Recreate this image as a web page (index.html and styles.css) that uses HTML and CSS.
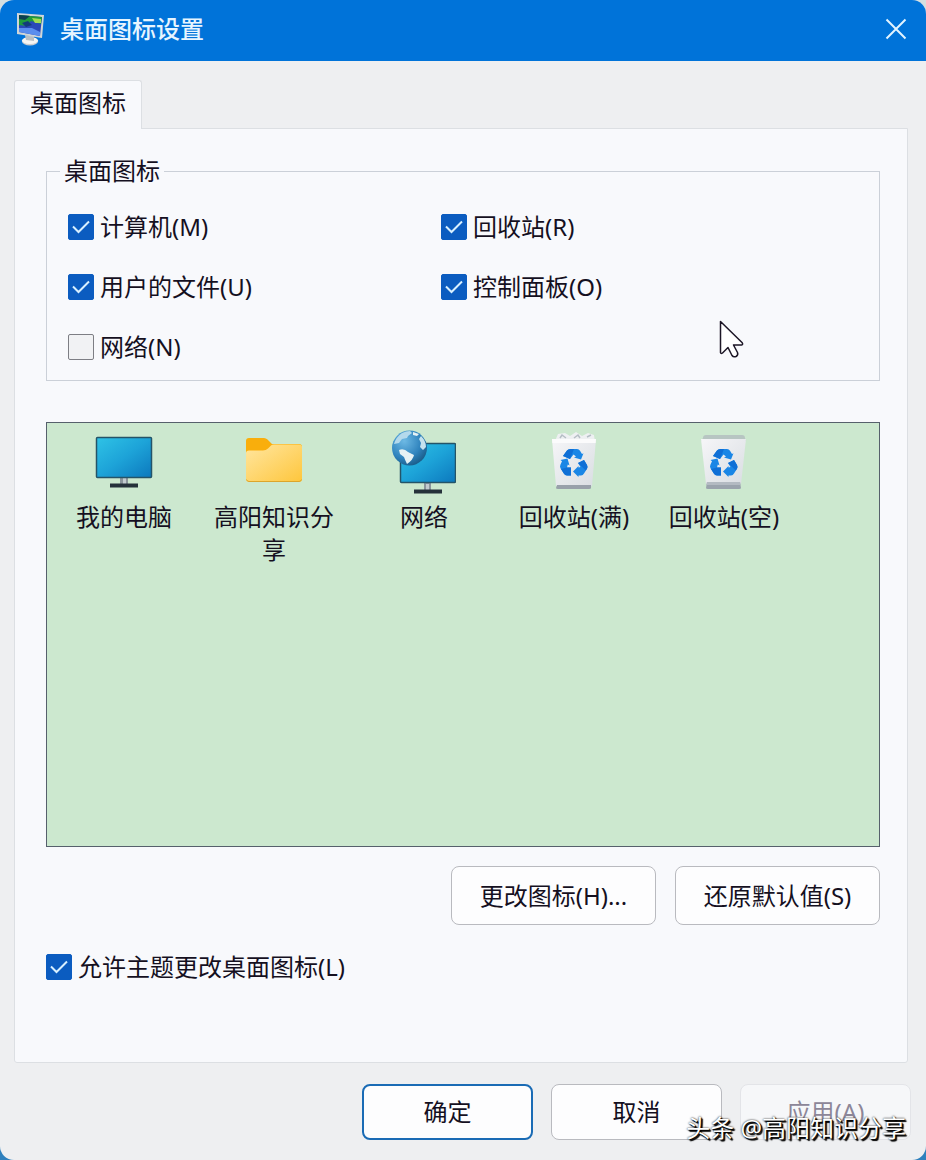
FILE: index.html
```html
<!DOCTYPE html>
<html lang="zh-CN">
<head>
    <meta charset="UTF-8">
    <meta name="viewport" content="width=device-width, initial-scale=1.0">
    <title>桌面图标设置</title>
    <link rel="stylesheet" href="styles.css">
</head>
<body>
    <!-- shared shapes -->
    <svg class="defs" width="0" height="0" aria-hidden="true">
        <defs>
            <linearGradient id="screen" x1="0" y1="0" x2="1" y2="1">
                <stop offset="0" stop-color="#2fc3e6"/>
                <stop offset="0.5" stop-color="#1da3d8"/>
                <stop offset="1" stop-color="#0c78bd"/>
            </linearGradient>
            <linearGradient id="folder" x1="0" y1="0" x2="1" y2="1">
                <stop offset="0" stop-color="#ffe6a0"/>
                <stop offset="1" stop-color="#fec63c"/>
            </linearGradient>
            <radialGradient id="globe" cx="0.35" cy="0.3" r="0.8">
                <stop offset="0" stop-color="#6db9e4"/>
                <stop offset="0.6" stop-color="#2f83bd"/>
                <stop offset="1" stop-color="#16557f"/>
            </radialGradient>
            <linearGradient id="bin" x1="0" y1="0" x2="1" y2="1">
                <stop offset="0" stop-color="#f6f6f8"/>
                <stop offset="1" stop-color="#d9dde2"/>
            </linearGradient>
            <g id="recycle">
                <path fill="#1a86e6" d="M24 30 L28 24.500 Q29 23 31.500 23 H38 Q40 23 41 24.700 L43 28 L44.500 27.200 L42 33.500 L35 31.500 L37 30.500 L34.500 28.500 L31 33 Z"/>
                <path fill="#0f6fd6" d="M24 30 L28 24.500 Q29 23 31.500 23 H35 L31 33 Z"/>
                <path fill="#1a86e6" d="M45 34 L48 39 Q49 41 48 42.800 L45 47.500 Q44 49.500 42 49.500 H39.500 V51 L34 45.500 L39.500 40 V41.500 L41.500 41 L39 37 Z"/>
                <path fill="#0f6fd6" d="M45 34 L48 39 Q49 41 48 42.800 L46.800 44.500 L39 37 Z"/>
                <path fill="#1a86e6" d="M21.500 34 L28.500 32.500 L30.500 39.500 L28.800 38.600 L28 41.500 H32 V49.500 H28 Q26 49.500 25 47.800 L21.500 42.300 Q20.500 40.500 21.500 38.500 L23 35.200 Z"/>
                <path fill="#0f6fd6" d="M32 41.500 V49.500 H28 Q26 49.500 25 47.800 L22 43 L28 41.500 Z"/>
            </g>
        </defs>
    </svg>

    <main class="dialog">
        <header class="titlebar">
            <svg class="title-icon" width="32" height="36" viewBox="0 0 32 36" aria-hidden="true">
                <ellipse cx="16" cy="30.500" rx="8" ry="4" fill="#c9ccd0"/>
                <ellipse cx="16" cy="29.500" rx="8" ry="3.500" fill="#f5f5f3"/>
                <path d="M11 24 L20 25 V30 L12 29 Z" fill="#b9bfc4"/>
                <path d="M3 2 L30 4 L28 27 L3 23 Z" fill="#cfd6d8"/>
                <path d="M5 4 L28 6 L26 25 L5 21 Z" fill="#2a49b8"/>
                <path d="M5 4 L28 6 L27 13 L17 10 L13 15 L5 14 Z" fill="#1f9a3c"/>
                <path d="M5 4 L16 5 L11 9 L5 8 Z" fill="#0d3f50"/>
                <path d="M18 7 L27 8 L27 12 L21 12 Z" fill="#a2dc52"/>
                <path d="M8 12 L14 10 L18 14 L12 16 Z" fill="#123b7a"/>
                <path d="M5 17 L18 17 L26 21 L26 25 L5 21 Z" fill="#5a8eee"/>
            </svg>
            <h1>桌面图标设置</h1>
            <button class="close" type="button" aria-label="关闭">
                <svg width="22" height="22" viewBox="0 0 22 22" aria-hidden="true">
                    <path d="M1.500 1.500 L20.500 20.500 M20.500 1.500 L1.500 20.500" stroke="#e2f4ff" stroke-width="2" fill="none"/>
                </svg>
            </button>
        </header>

        <div class="content">
            <div class="tabs">
                <button class="tab" type="button">桌面图标</button>
            </div>

            <section class="panel">
                <fieldset class="group">
                    <legend>桌面图标</legend>
                    <div class="options">
                        <label class="check"><input type="checkbox" checked>计算机(M)</label>
                        <label class="check"><input type="checkbox" checked>回收站(R)</label>
                        <label class="check"><input type="checkbox" checked>用户的文件(U)</label>
                        <label class="check"><input type="checkbox" checked>控制面板(O)</label>
                        <label class="check"><input type="checkbox">网络(N)</label>
                    </div>
                    <svg class="cursor" width="26" height="40" viewBox="0 0 26 40" aria-hidden="true">
                        <path d="M1.500 1.500 V32.500 Q2 34 3.500 33 L9 27.500 L13 35.500 Q14.500 37.500 17 36.500 Q19.500 35 18.500 32.500 L14.500 25 H22.500 Q24.500 24.500 23 22.500 Z" fill="#fff" stroke="#1c1626" stroke-width="1.500" stroke-linejoin="round"/>
                    </svg>
                </fieldset>

                <ul class="icons">
                    <li>
                        <svg width="64" height="64" viewBox="0 0 64 64" aria-hidden="true">
                            <rect x="28" y="47" width="8" height="7" fill="#8b959c"/>
                            <rect x="31" y="48" width="3" height="6" fill="#c3cbd0"/>
                            <rect x="18" y="53.500" width="28" height="4" fill="#25313a"/>
                            <rect x="4.500" y="7.500" width="55" height="40" rx="1" fill="url(#screen)" stroke="#245468" stroke-width="1.500"/>
                        </svg>
                        <span>我的电脑</span>
                    </li>
                    <li>
                        <svg width="64" height="64" viewBox="0 0 64 64" aria-hidden="true">
                            <path d="M4 11 Q4 8 7 8 H22 Q24 8 25.500 9.500 L30 14 H57 Q60 14 60 17 V30 H4 Z" fill="#f9ae0c"/>
                            <path d="M4 23 Q4 20.500 7 20.500 H21 Q24 20.500 26 18.500 L29 15.500 Q30 14.500 32 14.500 H57 Q60 14.500 60 17 V49 Q60 52 57 52 H7 Q4 52 4 49 Z" fill="url(#folder)"/>
                            <path d="M4.500 49.500 Q5 51.500 7 51.500 H57 Q59 51.500 59.500 49.500" fill="none" stroke="#dca52c"/>
                        </svg>
                        <span>高阳知识分享</span>
                    </li>
                    <li>
                        <svg width="64" height="64" viewBox="0 0 64 64" aria-hidden="true">
                            <rect x="32" y="53" width="7" height="7" fill="#8b959c"/>
                            <rect x="34" y="54" width="3" height="6" fill="#c3cbd0"/>
                            <rect x="22" y="59.500" width="28" height="4" fill="#25313a"/>
                            <rect x="8.500" y="13.500" width="55" height="39" rx="1" fill="url(#screen)" stroke="#245468" stroke-width="1.500"/>
                            <circle cx="17.500" cy="18" r="17.500" fill="url(#globe)"/>
                            <path d="M10 3 Q14 1 18 1 L20 3 L16 6 L15 8 L10 9 L7 13 L2 14 Q4 7 10 3 Z" fill="#b4d9ec"/>
                            <path d="M7 20 Q12 18 16 22 L22 25 Q21 30 15 34 Q13 30 12 27 L8 24 Z" fill="#e5f1f4"/>
                            <path d="M29 6 Q34 11 34 17 L31 20 L28 17 L29 13 L27 9 Z" fill="#c5e2ee"/>
                            <path d="M21 2 L27 4 L25 6 L21 5 Z" fill="#e5f1f4"/>
                        </svg>
                        <span>网络</span>
                    </li>
                    <li>
                        <svg width="64" height="64" viewBox="0 0 64 64" aria-hidden="true">
                            <path d="M13 11 L16 4 L23 3 L28 6 L34 2 L40 6 L46 3 L52 5 L53 12 Z" fill="#eef0f2"/>
                            <path d="M18 8 L20 5 L24 8 M32 8 L36 5 L38 8 M45 7 L49 5" stroke="#b5bec5" stroke-width="1.500" fill="none"/>
                            <path d="M10 9 H54 L50 56 H14 Z" fill="url(#bin)"/>
                            <path d="M10 9 H54 L53.600 13 H10.400 Z" fill="#fbfbfc"/>
                            <path d="M15 55 H49 L49 58 Q49 59 47 59 H16 Q14 59 14 58 Z" fill="#98a0aa"/>
                            <use href="#recycle" x="-3" y="-4"/>
                        </svg>
                        <span>回收站(满)</span>
                    </li>
                    <li>
                        <svg width="64" height="64" viewBox="0 0 64 64" aria-hidden="true">
                            <path d="M11 8 Q11 5 14 5 H50 Q53 5 53 8 L54 11 H9 Z" fill="#b7c5c2"/>
                            <path d="M9 9 H54 L49 54 H14 Z" fill="url(#bin)"/>
                            <path d="M15 52 H48 L49 58 Q49 59 47 59 H16 Q14 59 14 58 Z" fill="#9aa3ad"/>
                            <path d="M15 52 H48 L48.500 55 H14.500 Z" fill="#b3bac2"/>
                            <use href="#recycle" x="-3" y="-4"/>
                        </svg>
                        <span>回收站(空)</span>
                    </li>
                </ul>

                <div class="actions">
                    <button class="btn wide" type="button">更改图标(H)...</button>
                    <button class="btn wide" type="button">还原默认值(S)</button>
                </div>

                <label class="check theme"><input type="checkbox" checked>允许主题更改桌面图标(L)</label>
            </section>
        </div>

        <footer class="footer">
            <button class="btn primary" type="button">确定</button>
            <button class="btn" type="button">取消</button>
            <button class="btn" type="button" disabled>应用(A)</button>
        </footer>

        <div class="watermark">头条 @高阳知识分享</div>
    </main>
</body>
</html>
```
FILE: styles.css
```css
* {
    box-sizing: border-box;
}
body {
    margin: 0;
    background: linear-gradient(#d5dfe0 50%, #2f80bd 50%);
    font-family: "Noto Sans", "Noto Sans CJK SC", sans-serif;
    font-size: 24px;
    line-height: 32px;
    color: #15101f;
}
button {
    font: inherit;
    color: inherit;
}
.defs {
    display: block;
}
.dialog {
    position: relative;
    display: flex;
    flex-direction: column;
    min-height: 100vh;
    background-color: #eeeff1;
    border-radius: 14px;
    overflow: hidden;
}

/* title bar */
.titlebar {
    display: flex;
    align-items: center;
    gap: 14px;
    height: 61px;
    padding: 0 14px 3px;
    background-color: #0073d9;
    color: #e6f5ff;
}
.titlebar h1 {
    flex: 1;
    margin: 0;
    font-size: 24px;
    font-weight: 500;
}
.close {
    display: flex;
    padding: 5px;
    border: 0;
    background: none;
}

/* tab and panel */
.content {
    flex: 1;
    display: flex;
    flex-direction: column;
    padding: 19px 18px 0 14px;
}
.tabs {
    display: flex;
}
.tab {
    position: relative;
    height: 49px;
    margin-bottom: -1px;
    padding: 0 15px 4px;
    border: 1px solid #dcdfe3;
    border-bottom: 0;
    border-radius: 3px 3px 0 0;
    background-color: #f8f9fc;
}
.panel {
    flex: 1;
    display: flex;
    flex-direction: column;
    padding: 26px 27px 79px 31px;
    border: 1px solid #dcdfe3;
    border-radius: 0 0 3px 3px;
    background-color: #f8f9fc;
}

/* check boxes */
.group {
    position: relative;
    margin: 0;
    padding: 10px 0 3px 21px;
    border: 1px solid #cbd0d8;
}
.group legend {
    margin-left: -8px;
    padding: 0 4px;
}
.options {
    display: grid;
    grid-template-columns: 46% 1fr;
    grid-auto-rows: 60px;
}
.check {
    display: flex;
    align-items: center;
    gap: 6px;
}
.check input {
    appearance: none;
    width: 26px;
    height: 26px;
    margin: 0;
    border: 1px solid #7d7e84;
    border-radius: 2px;
    background-color: #f1f2f4;
}
.check input:checked {
    border-color: #0b5cc0;
    background: #0b5cc0 url("data:image/svg+xml,%3Csvg xmlns='http://www.w3.org/2000/svg' viewBox='0 0 24 24'%3E%3Cpath d='M4 11.500 L9.500 17 L20 6.500' fill='none' stroke='%23d8f0ff' stroke-width='2'/%3E%3C/svg%3E") center / 24px no-repeat;
}
.cursor {
    position: absolute;
    top: 133px;
    right: 134px;
}

/* icon list */
.icons {
    flex: 1;
    display: flex;
    flex-wrap: wrap;
    align-content: flex-start;
    margin: 41px 0 19px;
    padding: 7px 2px;
    list-style: none;
    border: 1px solid #56606c;
    background-color: #cce8cf;
}
.icons li {
    display: flex;
    flex-direction: column;
    align-items: center;
    gap: 6px;
    width: 150px;
    padding: 0 8px;
    line-height: 33px;
    text-align: center;
}

/* buttons */
.actions {
    display: flex;
    justify-content: flex-end;
    gap: 19px;
}
.btn {
    width: 171px;
    height: 56px;
    padding: 0 8px;
    border: 1px solid #b9babf;
    border-radius: 8px;
    background-color: #fdfdfe;
}
.btn.wide {
    width: 205px;
    height: 59px;
}
.btn.primary {
    border: 2px solid #1a6bb5;
}
.btn:disabled {
    border-color: #e3e4e8;
    background-color: #f6f7f9;
    color: #8c8698;
}
.theme {
    margin-top: 26px;
}
.footer {
    display: flex;
    justify-content: flex-end;
    gap: 18px;
    padding: 21px 15px 20px;
}

.watermark {
    position: absolute;
    right: 20px;
    bottom: 16px;
    font-size: 24px;
    color: #fff;
    text-shadow: 1px 1px 1px #000, 2px 2px 1px #000, 0 0 2px #000;
}
```
